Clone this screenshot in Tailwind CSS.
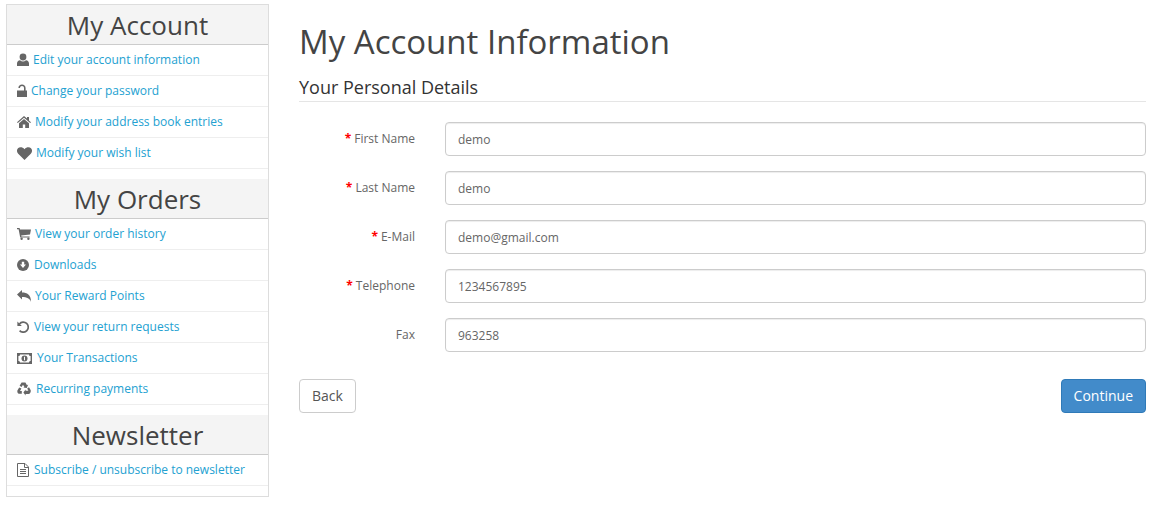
<!DOCTYPE html>
<html><head><meta charset="utf-8"><script src="https://cdn.jsdelivr.net/npm/@tailwindcss/browser@4"></script></head>
<body class="bg-white font-['Open_Sans',sans-serif] text-[12px] text-[#666]">
<div class="flex items-start w-[1170px] h-[511px] overflow-hidden pt-[4px] pl-[6px]">
<aside class="w-[263px] h-[493px] shrink-0 border border-[#ddd] flex flex-col">
  <h2 class="h-[40px] bg-[#f4f4f4] border-b border-[#ccc] text-center text-[26px] leading-[41px] text-[#444]">My Account</h2>
  <ul class="text-[#23a1d1]">
    <li class="h-[31px] border-b border-[#eee] flex items-center pl-[10px]"><svg class="w-[12px] h-[14px] mr-[4px] shrink-0" viewBox="0 0 12 14" fill="#666"><circle cx="6" cy="4" r="3.4"/><path d="M0 13V10.5C0 8.5 1.3 7.2 3 7.2C4 8 5 8.4 6 8.4S8 8 9 7.2C10.7 7.2 12 8.5 12 10.5V13Z"/></svg><a>Edit your account information</a></li>
    <li class="h-[31px] border-b border-[#eee] flex items-center pl-[10px]"><svg class="w-[10px] h-[14px] mr-[4px] shrink-0" viewBox="0 0 10 14" fill="#666"><path d="M0 6.5H7V4C7 2.9 6.2 2 5 2S3 2.9 3 4H1.4C1.4 1.8 3 .6 5 .6S8.6 1.8 8.6 4V6.5H10V13H0Z"/></svg><a>Change your password</a></li>
    <li class="h-[31px] border-b border-[#eee] flex items-center pl-[10px]"><svg class="w-[14px] h-[12px] mr-[4px] shrink-0" viewBox="0 0 14 12" fill="#666"><path d="M7 0L10 2.6V1H12V4.4L14 6.2L13.2 7L7 1.8L.8 7L0 6.2Z"/><path d="M7 3L12 7.2V12H8.2V8.4H5.8V12H2V7.2Z"/></svg><a>Modify your address book entries</a></li>
    <li class="h-[31px] border-b border-[#eee] flex items-center pl-[10px]"><svg class="w-[15px] h-[13px] mr-[4px] shrink-0" viewBox="0 0 15 13" fill="#666"><path d="M7.5 13L1.2 6.8C-.4 5.1-.4 2.7 1 1.2S5.6-.3 7.5 2.2C9.4-.3 12.6-.3 14 1.2S15.4 5.1 13.8 6.8Z"/></svg><a>Modify your wish list</a></li>
  </ul>
  <h2 class="mt-[10px] h-[40px] bg-[#f4f4f4] border-b border-[#ccc] text-center text-[26px] leading-[41px] text-[#444]">My Orders</h2>
  <ul class="text-[#23a1d1]">
    <li class="h-[31px] border-b border-[#eee] flex items-center pl-[10px]"><svg class="w-[14px] h-[12px] mr-[4px] shrink-0" viewBox="0 0 14 12" fill="#666"><path d="M0 0H2.6L3 1.4H14L13 6.6L4.2 7.6L4.4 8.4H12.6V9.6H3.2L1.6 1.2H0Z"/><circle cx="4.6" cy="10.8" r="1.2"/><circle cx="11.4" cy="10.8" r="1.2"/></svg><a>View your order history</a></li>
    <li class="h-[31px] border-b border-[#eee] flex items-center pl-[10px]"><svg class="w-[12px] h-[12px] mr-[5px] shrink-0" viewBox="0 0 12 12"><circle cx="6" cy="6" r="6" fill="#666"/><path d="M4.8 2.8H7.2V5.6H9L6 9L3 5.6H4.8Z" fill="#fff"/></svg><a>Downloads</a></li>
    <li class="h-[31px] border-b border-[#eee] flex items-center pl-[10px]"><svg class="w-[14px] h-[12px] mr-[4px] shrink-0" viewBox="0 0 14 12" fill="#666"><path d="M0 4.6L5 0V2.6C10 2.6 14 4.6 14 12C13 8.6 10 7 5 7V9.4Z"/></svg><a>Your Reward Points</a></li>
    <li class="h-[31px] border-b border-[#eee] flex items-center pl-[10px]"><svg class="w-[12px] h-[12px] mr-[5px] shrink-0" viewBox="0 0 12 12" fill="none" stroke="#666" stroke-width="1.7"><path d="M2.4 3A5 5 0 1 1 2.6 9.6"/><path d="M.4 .6V5H4.8Z" fill="#666" stroke="none"/></svg><a>View your return requests</a></li>
    <li class="h-[31px] border-b border-[#eee] flex items-center pl-[10px]"><svg class="w-[15px] h-[11px] mr-[5px] shrink-0" viewBox="0 0 15 11"><path d="M0 0H15V11H0Z" fill="#666"/><path d="M3 1.4H12C12 2.4 12.6 3 13.6 3V8C12.6 8 12 8.6 12 9.6H3C3 8.6 2.4 8 1.4 8V3C2.4 3 3 2.4 3 1.4Z" fill="#fff"/><circle cx="7.5" cy="5.5" r="3" fill="#666"/><path d="M7 3.8H8V7.2H7Z" fill="#fff"/></svg><a>Your Transactions</a></li>
    <li class="h-[31px] border-b border-[#eee] flex items-center pl-[10px]"><svg class="w-[14px] h-[14px] mr-[5px] shrink-0" viewBox="0 0 14 14" fill="#666"><path d="M4.6 .6H8.4L10 3.2L11.2 2.6L9.8 6L6.2 5.6L7.4 5L6 2.8L4.6 5L2.6 3.8Z"/><path d="M.4 8.6L2.2 5.4L4.4 6.6L3 9L4.8 9V11.8H2C.8 11.8 0 10 .4 8.6Z"/><path d="M13.6 8L12 5.2L10.2 6.4L11.4 8.8H8.6V7.6L6.4 10.6L8.6 13.4V12H11.6C13.2 12 14.2 9.6 13.6 8Z"/></svg><a>Recurring payments</a></li>
  </ul>
  <h2 class="mt-[10px] h-[40px] bg-[#f4f4f4] border-b border-[#ccc] text-center text-[26px] leading-[41px] text-[#444]">Newsletter</h2>
  <ul class="text-[#23a1d1]">
    <li class="h-[31px] border-b border-[#eee] flex items-center pl-[10px]"><svg class="w-[12px] h-[14px] mr-[5px] shrink-0" viewBox="0 0 12 14" fill="none" stroke="#666"><path d="M.5 .5H8L11.5 4V13.5H.5Z"/><path d="M7.5 .5V4.5H11.5"/><path d="M3 6.5H9M3 8.5H9M3 10.5H9"/></svg><a>Subscribe / unsubscribe to newsletter</a></li>
  </ul>
</aside>
<main class="ml-[30px] w-[847px]">
  <h1 class="text-[33px] leading-[36px] text-[#444] mt-[20px]">My Account Information</h1>
  <h3 class="mt-[15px] h-[27px] border-b border-[#e5e5e5] text-[18px] leading-[25px] text-[#333] pb-[2px]">Your Personal Details</h3>
  <form class="mt-[20px] flex flex-col gap-[15px]">
    <div class="flex items-center h-[34px]"><label class="w-[116px] text-right"><span class="text-[#f00] font-bold mr-[3px]">*</span>First Name</label><div class="ml-[30px] flex-1 h-[34px] border border-[#ccc] rounded-[4px] shadow-[inset_0_1px_1px_rgba(0,0,0,.075)] px-[12px] leading-[33px]">demo</div></div>
    <div class="flex items-center h-[34px]"><label class="w-[116px] text-right"><span class="text-[#f00] font-bold mr-[3px]">*</span>Last Name</label><div class="ml-[30px] flex-1 h-[34px] border border-[#ccc] rounded-[4px] shadow-[inset_0_1px_1px_rgba(0,0,0,.075)] px-[12px] leading-[33px]">demo</div></div>
    <div class="flex items-center h-[34px]"><label class="w-[116px] text-right"><span class="text-[#f00] font-bold mr-[3px]">*</span>E-Mail</label><div class="ml-[30px] flex-1 h-[34px] border border-[#ccc] rounded-[4px] shadow-[inset_0_1px_1px_rgba(0,0,0,.075)] px-[12px] leading-[33px]">demo@gmail.com</div></div>
    <div class="flex items-center h-[34px]"><label class="w-[116px] text-right"><span class="text-[#f00] font-bold mr-[3px]">*</span>Telephone</label><div class="ml-[30px] flex-1 h-[34px] border border-[#ccc] rounded-[4px] shadow-[inset_0_1px_1px_rgba(0,0,0,.075)] px-[12px] leading-[33px]">1234567895</div></div>
    <div class="flex items-center h-[34px]"><label class="w-[116px] text-right">Fax</label><div class="ml-[30px] flex-1 h-[34px] border border-[#ccc] rounded-[4px] shadow-[inset_0_1px_1px_rgba(0,0,0,.075)] px-[12px] leading-[33px]">963258</div></div>
  </form>
  <div class="mt-[27px] flex justify-between">
    <a class="h-[34px] px-[12px] border border-[#ccc] rounded-[4px] text-[14px] leading-[32px] text-[#555]">Back</a>
    <a class="h-[34px] px-[12px] border border-[#2f7ab8] rounded-[4px] bg-[#428bca] text-[14px] leading-[32px] text-white">Continue</a>
  </div>
</main>
</div>
</body></html>
